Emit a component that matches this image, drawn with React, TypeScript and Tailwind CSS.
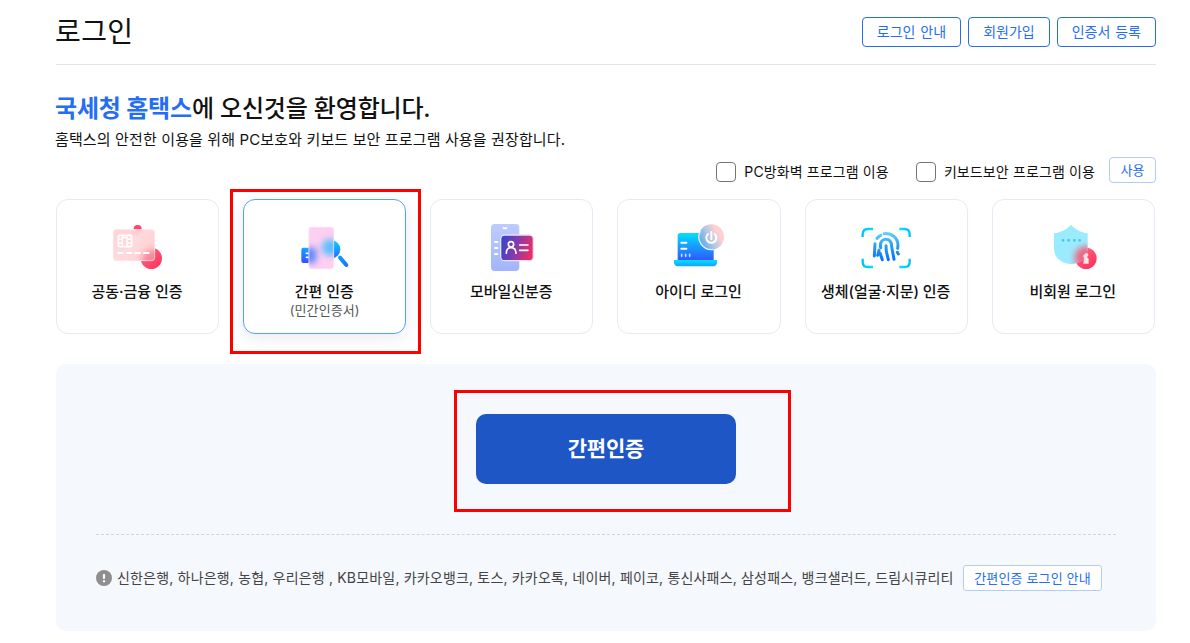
import clsx from "clsx";
import { ReactNode } from "react";

const CertIcon = () => (
  <svg width="90" height="60" viewBox="9 0 270 180" fill="none">
    <defs>
      <linearGradient id="certDot" x1="155" y1="98" x2="215" y2="160" gradientUnits="userSpaceOnUse">
        <stop stopColor="#FF7088" />
        <stop offset="1" stopColor="#FF2E59" />
      </linearGradient>
      <linearGradient id="certCard" x1="70" y1="42" x2="195" y2="138" gradientUnits="userSpaceOnUse">
        <stop stopColor="#FFD3D8" />
        <stop offset="0.5" stopColor="#FFDADD" />
        <stop offset="1" stopColor="#FFC9CE" />
      </linearGradient>
      <filter id="certBlur" x="-50%" y="-50%" width="200%" height="200%">
        <feGaussianBlur stdDeviation="9" />
      </filter>
      <clipPath id="certClip">
        <rect x="69" y="43" width="126" height="95" rx="11" />
      </clipPath>
    </defs>
    <circle cx="143" cy="42" r="12" fill="#FF4568" />
    <circle cx="184" cy="130" r="32" fill="url(#certDot)" />
    <rect x="69" y="43" width="126" height="95" rx="11" fill="url(#certCard)" />
    <g clipPath="url(#certClip)">
      <circle cx="184" cy="132" r="27" fill="#FF6C82" opacity="0.75" filter="url(#certBlur)" />
      <circle cx="143" cy="42" r="11" fill="#FF8797" opacity="0.4" filter="url(#certBlur)" />
    </g>
    <rect x="70" y="44" width="124" height="93" rx="10" stroke="#FFEDEF" strokeWidth="2" />
    <rect x="85" y="61" width="40" height="34" rx="5" stroke="white" strokeWidth="5" />
    <path d="M85 72h12M85 84h12M97 62v32M97 68h14v26M113 72h12M113 84h12M111 62v32" stroke="white" strokeWidth="4" />
    <path d="M84 114h14M110 114h14M136 114h14M162 114h14" stroke="white" strokeWidth="6" strokeLinecap="round" />
  </svg>
);

const SimpleIcon = () => (
  <svg width="90" height="60" viewBox="-1 0 270 180" fill="none">
    <defs>
      <linearGradient id="simpleBlue" x1="0" y1="76" x2="0" y2="145" gradientUnits="userSpaceOnUse">
        <stop stopColor="#00D5FF" />
        <stop offset="1" stopColor="#3A49FF" />
      </linearGradient>
      <linearGradient id="simpleHandle" x1="178" y1="124" x2="202" y2="152" gradientUnits="userSpaceOnUse">
        <stop stopColor="#0C9CFF" />
        <stop offset="1" stopColor="#1973FF" />
      </linearGradient>
      <filter id="simpleBlur" x="-60%" y="-60%" width="220%" height="220%">
        <feGaussianBlur stdDeviation="10" />
      </filter>
      <clipPath id="simpleClip">
        <rect x="85" y="36" width="76" height="126" rx="9" />
      </clipPath>
    </defs>
    <rect x="63" y="98" width="50" height="46" rx="6" fill="url(#simpleBlue)" />
    <path d="M78 115h12M78 127h12" stroke="white" strokeWidth="5" strokeLinecap="round" />
    <circle cx="153" cy="103" r="27" fill="url(#simpleBlue)" />
    <path d="M179 128l19 22" stroke="url(#simpleHandle)" strokeWidth="12" strokeLinecap="round" />
    <rect x="85" y="36" width="76" height="126" rx="9" fill="#FFCFF2" />
    <g clipPath="url(#simpleClip)">
      <rect x="66" y="98" width="42" height="46" rx="5" fill="#427DFF" opacity="0.85" filter="url(#simpleBlur)" />
      <circle cx="150" cy="97" r="26" fill="#43BDFF" opacity="0.85" filter="url(#simpleBlur)" />
    </g>
    <rect x="86" y="37" width="74" height="124" rx="8" stroke="#FFE4F8" strokeWidth="2" />
  </svg>
);

const MobileIcon = () => (
  <svg width="90" height="60" viewBox="-9 0 270 180" fill="none">
    <defs>
      <linearGradient id="mobilePhone" x1="105" y1="27" x2="105" y2="168" gradientUnits="userSpaceOnUse">
        <stop stopColor="#BECBFF" />
        <stop offset="1" stopColor="#A2B5FA" />
      </linearGradient>
      <linearGradient id="mobileCard" x1="92" y1="85" x2="190" y2="112" gradientUnits="userSpaceOnUse">
        <stop stopColor="#3445D0" />
        <stop offset="0.5" stopColor="#8B3AA8" />
        <stop offset="1" stopColor="#F92B5F" />
      </linearGradient>
    </defs>
    <rect x="63" y="27" width="85" height="141" rx="11" fill="url(#mobilePhone)" />
    <path d="M97 37h16l-3 6h-10z" fill="white" />
    <path d="M75 81h7M75 99h7M75 117h7" stroke="white" strokeWidth="6" strokeLinecap="round" />
    <rect x="92" y="60" width="98" height="77" rx="12" fill="url(#mobileCard)" stroke="#EBDFFC" strokeWidth="4" />
    <circle cx="123" cy="88" r="8" stroke="white" strokeWidth="5" />
    <path d="M109 115c0-11 5-17 14-17s15 6 15 17M149 90h25M149 106h25" stroke="white" strokeWidth="5" strokeLinecap="round" />
  </svg>
);

const IdIcon = () => (
  <svg width="90" height="60" viewBox="-2 0 270 180" fill="none">
    <defs>
      <linearGradient id="idScreen" x1="0" y1="54" x2="0" y2="136" gradientUnits="userSpaceOnUse">
        <stop stopColor="#00E0FF" />
        <stop offset="1" stopColor="#3057FF" />
      </linearGradient>
      <linearGradient id="idBase" x1="0" y1="135" x2="0" y2="154" gradientUnits="userSpaceOnUse">
        <stop stopColor="#00E2FF" />
        <stop offset="1" stopColor="#199EFF" />
      </linearGradient>
      <linearGradient id="idPower" x1="140" y1="82" x2="200" y2="50" gradientUnits="userSpaceOnUse">
        <stop stopColor="#69ADEB" />
        <stop offset="0.5" stopColor="#BECBE2" />
        <stop offset="0.85" stopColor="#FFCFD2" />
      </linearGradient>
    </defs>
    <path d="M69 62a8 8 0 0 1 8-8h92a8 8 0 0 1 8 8v74H69z" fill="url(#idScreen)" />
    <path d="M58 135h129v7c0 7-4 12-11 12H69c-7 0-11-5-11-12z" fill="url(#idBase)" />
    <path d="M80 83h15M80 101h15" stroke="white" strokeWidth="6" strokeLinecap="round" />
    <path d="M81 118v6M93 118v6M105 118v6" stroke="#BFE0FF" strokeWidth="5" strokeLinecap="round" />
    <circle cx="170" cy="66" r="38" fill="url(#idPower)" />
    <path d="M137 48a38 38 0 0 0 40 55" stroke="#E8F5FF" strokeWidth="4" />
    <path d="M170 51v22M160 57a15 15 0 1 0 20 0" stroke="white" strokeWidth="6" strokeLinecap="round" />
  </svg>
);

const BioIcon = () => (
  <svg width="90" height="60" viewBox="4 0 270 180" fill="none">
    <defs>
      <linearGradient id="bioPrint" x1="0" y1="50" x2="0" y2="138" gradientUnits="userSpaceOnUse">
        <stop stopColor="#65D5F8" />
        <stop offset="0.5" stopColor="#299DF2" />
        <stop offset="1" stopColor="#066DFF" />
      </linearGradient>
      <linearGradient id="bioFrame" x1="66" y1="0" x2="212" y2="0" gradientUnits="userSpaceOnUse">
        <stop stopColor="#00BFFF" />
        <stop offset="0.25" stopColor="#00E8F3" />
        <stop offset="0.75" stopColor="#00E8F3" />
        <stop offset="1" stopColor="#00BFFF" />
      </linearGradient>
    </defs>
    <path d="M69 66V58q0-16 16-16h15M179 42h15q16 0 16 16v8M69 131v9q0 16 16 16h15M179 156h15q16 0 16-16v-9" stroke="url(#bioFrame)" strokeWidth="7" />
    <path
      d="M104 123l2-37M112 70q6-7 11-9M133 56c25-3 41 14 42 34l-1 10M173 112l3 5M123 98c-3-17 5-25 15-25 13 0 18 9 18 22l7 38M114 121l4-15M121 114l7 20M139 92l1 17 6 25"
      stroke="url(#bioPrint)"
      strokeWidth="9"
      strokeLinecap="round"
    />
  </svg>
);

const GuestIcon = () => (
  <svg width="90" height="60" viewBox="-5 0 270 180" fill="none">
    <defs>
      <linearGradient id="guestDot" x1="145" y1="100" x2="195" y2="160" gradientUnits="userSpaceOnUse">
        <stop stopColor="#FF6C82" />
        <stop offset="1" stopColor="#FF2B59" />
      </linearGradient>
      <filter id="guestBlur" x="-60%" y="-60%" width="220%" height="220%">
        <feGaussianBlur stdDeviation="9" />
      </filter>
      <clipPath id="guestClip">
        <path d="M124 29c14 15 29 23 50 26v45c0 28-22 47-50 47s-51-19-51-47V55c22-3 37-11 51-26z" />
      </clipPath>
    </defs>
    <circle cx="169" cy="130" r="32" fill="url(#guestDot)" />
    <path d="M124 29c14 15 29 23 50 26v45c0 28-22 47-50 47s-51-19-51-47V55c22-3 37-11 51-26z" fill="#9BEBFF" />
    <g clipPath="url(#guestClip)">
      <circle cx="169" cy="128" r="34" fill="#F3647F" filter="url(#guestBlur)" />
    </g>
    <path d="M100 76h.1M117 76h.1M134 76h.1M150 76h.1" stroke="#3CCBDC" strokeWidth="8" strokeLinecap="round" />
    <path d="M169 114q8 0 7 7l-4 6 5 4v15h-16l2-17q-4-5-1-9z" fill="#FFE3E7" />
  </svg>
);

type LoginMethod = {
  label: string;
  sub?: string;
  icon: ReactNode;
};

const LOGIN_METHODS: LoginMethod[] = [
  { label: "공동·금융 인증", icon: <CertIcon /> },
  { label: "간편 인증", sub: "(민간인증서)", icon: <SimpleIcon /> },
  { label: "모바일신분증", icon: <MobileIcon /> },
  { label: "아이디 로그인", icon: <IdIcon /> },
  { label: "생체(얼굴·지문) 인증", icon: <BioIcon /> },
  { label: "비회원 로그인", icon: <GuestIcon /> },
];

const HeaderButton = ({ children }: { children: ReactNode }) => (
  <button className="h-[30px] rounded-[4px] border border-[#256ef4] px-[14px] text-[14px] leading-[26px] [word-spacing:1px] text-[#256ef4] whitespace-nowrap">
    {children}
  </button>
);

const SecurityCheck = ({ label }: { label: string }) => (
  <label className="flex items-center gap-2 whitespace-nowrap">
    <input type="checkbox" className="h-5 w-5 appearance-none rounded-[4px] border border-[#767676] bg-white" />
    <span className="text-[14px] leading-5 tracking-[0.12px]">{label}</span>
  </label>
);

const MethodCard = ({ method, active }: { method: LoginMethod; active: boolean }) => (
  <button
    className={clsx(
      "relative flex h-[135px] flex-col items-center rounded-[12px] border bg-white pt-[15px]",
      active ? "border-[#58a1f5] shadow-[0_4px_16px_rgba(40,60,120,0.1)]" : "border-[#e4eaf6]"
    )}
  >
    {method.icon}
    <span className="mt-[6px] -ml-px text-[15px] font-medium leading-[22px] tracking-[-0.05px] whitespace-nowrap">{method.label}</span>
    {method.sub && <span className="-mt-[3px] text-[13px] leading-5 tracking-[0.1px] text-[#555]">{method.sub}</span>}
    {active && <span className="pointer-events-none absolute -top-[11px] -left-[14px] h-[165px] w-[191px] border-3 border-[#ff0000]" />}
  </button>
);

export default function App() {
  return (
    <main className="h-[643px] w-[1190px] overflow-hidden bg-white pl-14 pr-[34px] font-['Inter','Noto_Sans_CJK_KR',sans-serif] text-[#111]">
      <header className="flex h-[65px] items-start justify-between border-b border-[#e0e4eb]">
        <h1 className="-ml-px mt-[13px] text-[28px] leading-[38px] tracking-[0.4px]">로그인</h1>
        <div className="mt-[17px] flex gap-[7px]">
          <HeaderButton>로그인 안내</HeaderButton>
          <HeaderButton>회원가입</HeaderButton>
          <HeaderButton>인증서 등록</HeaderButton>
        </div>
      </header>

      <section className="-ml-px pt-[27px]">
        <h2 className="text-[24px] font-medium leading-[34px] tracking-[-0.18px]">
          <strong className="font-bold text-[#256ef4]">국세청 홈택스</strong>에 오신것을 환영합니다.
        </h2>
        <p className="mt-[3px] text-[15px] leading-[22px] tracking-[0.13px]">
          홈택스의 안전한 이용을 위해 PC보호와 키보드 보안 프로그램 사용을 권장합니다.
        </p>
      </section>

      <div className="mt-[6px] flex h-[26px] items-start justify-end">
        <div className="mt-[5px] flex gap-[27px]">
          <SecurityCheck label="PC방화벽 프로그램 이용" />
          <SecurityCheck label="키보드보안 프로그램 이용" />
        </div>
        <button className="ml-[14px] h-[26px] w-[47px] rounded-[4px] border border-[#b3cbf8] text-[13px] leading-[24px] text-[#256ef4]">
          사용
        </button>
      </div>

      <div className="mt-4 grid w-[1098.9px] grid-cols-6 gap-6">
        {LOGIN_METHODS.map((method) => (
          <MethodCard key={method.label} method={method} active={!!method.sub} />
        ))}
      </div>

      <section className="mt-[30px] h-[267px] rounded-[10px] bg-[#f5f8fd] px-10 pt-[26px]">
        <div className="ml-[358px] h-[122px] w-[337px] border-3 border-[#ff0000] pt-[21px] pl-[19px]">
          <button className="h-[70px] w-[260px] rounded-[10px] bg-[#1e56c5] text-[21px] font-bold leading-[30px] tracking-[-0.2px] text-white">
            간편인증
          </button>
        </div>
        <div className="mt-[22px] flex items-center border-t border-dashed border-[#d0d5db] pt-[30px]">
          <svg width="16" height="16" viewBox="0 0 16 16" className="shrink-0">
            <circle cx="8" cy="8" r="8" fill="#8e8e8e" />
            <path d="M8 4.2v4.6" stroke="white" strokeWidth="2.2" />
            <path d="M8 10.2v2.1" stroke="white" strokeWidth="2.2" />
          </svg>
          <p className="ml-[5px] w-[837px] text-[14px] leading-[22px] tracking-[0.18px] text-[#444] whitespace-nowrap">
            신한은행, 하나은행, 농협, 우리은행 , KB모바일, 카카오뱅크, 토스, 카카오톡, 네이버, 페이코, 통신사패스, 삼성패스, 뱅크샐러드, 드림시큐리티
          </p>
          <button className="ml-[9px] h-[26px] w-[139px] shrink-0 rounded-[3px] border border-[#b3cbf8] bg-white text-[13px] leading-[24px] tracking-[0.15px] text-[#256ef4]">
            간편인증 로그인 안내
          </button>
        </div>
      </section>
    </main>
  );
}
